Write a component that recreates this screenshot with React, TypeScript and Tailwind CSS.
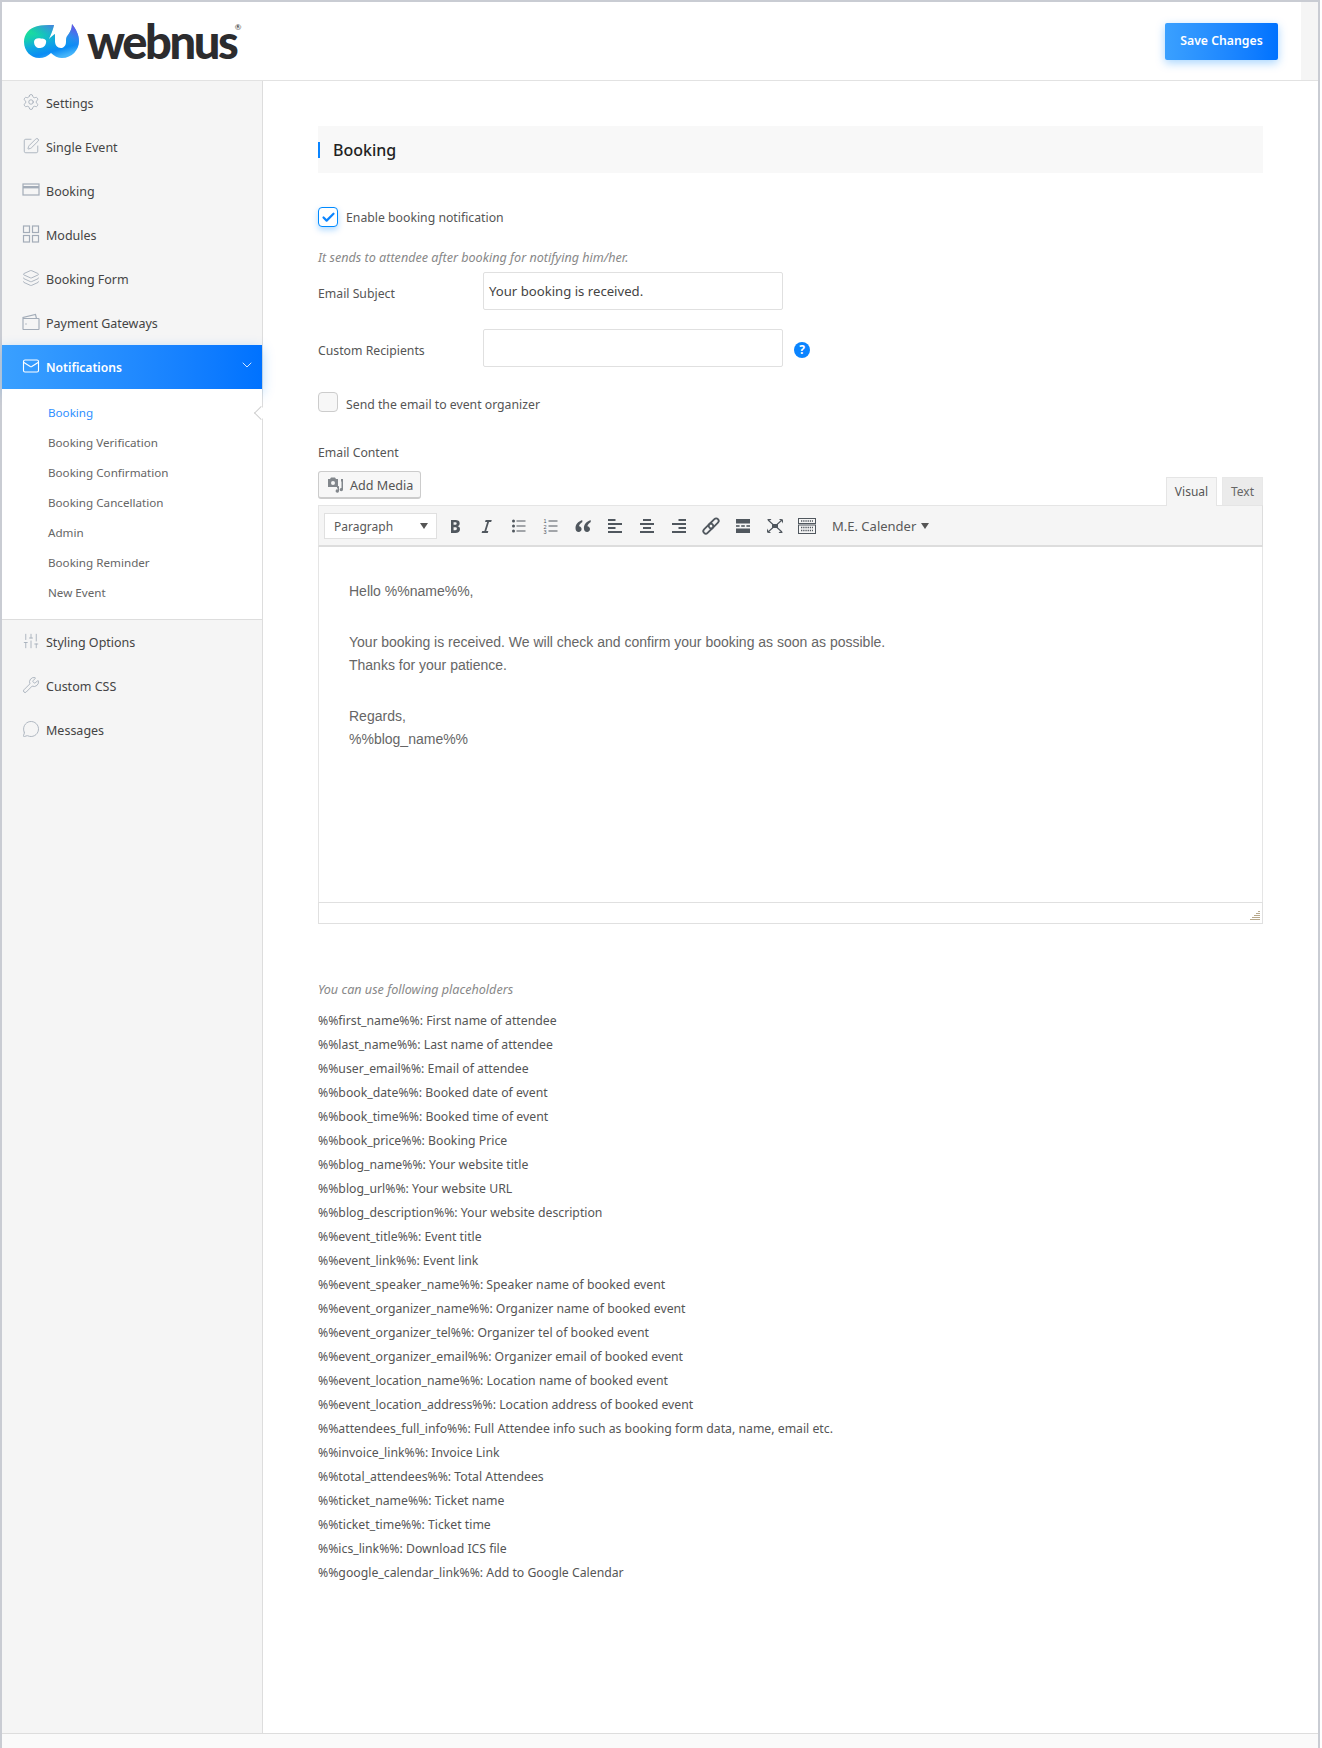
import React from "react";
import { Settings, SquarePen, Layers, Mail, ChevronDown, SlidersVertical, Wrench, MessageCircle, Check } from "lucide-react";

const ic = { size: 18, strokeWidth: 1.15, color: "#a3acb8" };

const CardIcon = () => (
  <svg width="18" height="18" viewBox="0 0 18 18" fill="none" stroke="#a3acb8" strokeWidth="1.2"><rect x="1" y="3" width="16" height="11" /><path d="M1 6.2h16" strokeWidth="2.4" /></svg>
);
const GridIcon = () => (
  <svg width="18" height="18" viewBox="0 0 18 18" fill="none" stroke="#a3acb8" strokeWidth="1.2"><rect x="1.5" y="1" width="6" height="6.5" /><rect x="10.5" y="1" width="6" height="6.5" /><rect x="1.5" y="10.5" width="6" height="6.5" /><rect x="10.5" y="10.5" width="6" height="6.5" /></svg>
);
const PurseIcon = () => (
  <svg width="18" height="18" viewBox="0 0 18 18" fill="none" stroke="#a3acb8" strokeWidth="1.15"><path d="M1.5 5.5h15a.5.5 0 01.5.5v10a.5.5 0 01-.5.5H1.5a.5.5 0 01-.5-.5V4.5L13.5 1.5l1 4" /><circle cx="4" cy="11" r=".7" fill="#a3acb8" stroke="none" /></svg>
);

const topItems: [string, React.ReactNode][] = [
  ["Settings", <Settings {...ic} />],
  ["Single Event", <SquarePen {...ic} />],
  ["Booking", <CardIcon />],
  ["Modules", <GridIcon />],
  ["Booking Form", <Layers {...ic} />],
  ["Payment Gateways", <PurseIcon />],
];
const bottomItems: [string, React.ReactNode][] = [
  ["Styling Options", <SlidersVertical {...ic} />],
  ["Custom CSS", <Wrench {...ic} />],
  ["Messages", <MessageCircle {...ic} />],
];
const subItems = ["Booking Verification", "Booking Confirmation", "Booking Cancellation", "Admin", "Booking Reminder", "New Event"];

const placeholders: [string, string][] = [
  ["first_name", "First name of attendee"],
  ["last_name", "Last name of attendee"],
  ["user_email", "Email of attendee"],
  ["book_date", "Booked date of event"],
  ["book_time", "Booked time of event"],
  ["book_price", "Booking Price"],
  ["blog_name", "Your website title"],
  ["blog_url", "Your website URL"],
  ["blog_description", "Your website description"],
  ["event_title", "Event title"],
  ["event_link", "Event link"],
  ["event_speaker_name", "Speaker name of booked event"],
  ["event_organizer_name", "Organizer name of booked event"],
  ["event_organizer_tel", "Organizer tel of booked event"],
  ["event_organizer_email", "Organizer email of booked event"],
  ["event_location_name", "Location name of booked event"],
  ["event_location_address", "Location address of booked event"],
  ["attendees_full_info", "Full Attendee info such as booking form data, name, email etc."],
  ["invoice_link", "Invoice Link"],
  ["total_attendees", "Total Attendees"],
  ["ticket_name", "Ticket name"],
  ["ticket_time", "Ticket time"],
  ["ics_link", "Download ICS file"],
  ["google_calendar_link", "Add to Google Calendar"],
];

const logoPath =
  "M30 1C23 1 18 1 14 2 5 4 0 10 0 18 0 27 7 34 15 34 20 34 24 32 27 29 30 32 34 34 38 34 48 34 55 26 55 17 55 11 52 5 48 0 48 5 46 8 44 11 42 13 42 15 42 18 42 22 39 24 37 24 33 24 31 21 31 17L31 10C29 11 27 13 25 15 27 10 29 6 30 1ZM10 18C10 15 13 13.5 17 14.5 20 15 23 15 22 19 21 23.5 17 24.5 14 24 12 23.5 10 21 10 18Z";

const Logo = () => (
  <div className="flex items-center">
    <svg width="55" height="34" viewBox="0 0 55 34" className="mt-[-1px] shrink-0">
      <defs>
        <linearGradient id="lg" x1="0.15" y1="0.05" x2="0.6" y2="1">
          <stop offset="0" stopColor="#1fe88a" />
          <stop offset="0.3" stopColor="#16d0b0" />
          <stop offset="0.55" stopColor="#0fa8e0" />
          <stop offset="0.8" stopColor="#0a8cf5" />
          <stop offset="1" stopColor="#45b4fa" />
        </linearGradient>
        <linearGradient id="lp" x1="0.95" y1="0" x2="0.6" y2="0.55">
          <stop offset="0" stopColor="#7d35ee" />
          <stop offset="0.6" stopColor="#3f7cf5" stopOpacity="0.6" />
          <stop offset="1" stopColor="#0a8cf5" stopOpacity="0" />
        </linearGradient>
      </defs>
      <path fillRule="evenodd" d={logoPath} fill="url(#lg)" />
      <path fillRule="evenodd" d={logoPath} fill="url(#lp)" />
    </svg>
    <div className="relative ml-[8px] font-['Lato','Inter',sans-serif] text-[47px] leading-[40px] font-black tracking-[-2.4px] text-[#2c2c2e]">
      webnus
      <span className="absolute right-[-5px] top-[1px] text-[8px] leading-[10px] font-normal tracking-normal">®</span>
    </div>
  </div>
);

const T = ({ children }: { children: React.ReactNode }) => (
  <span className="flex h-full w-[32px] shrink-0 items-center justify-center">{children}</span>
);
const G = ({ children }: { children: React.ReactNode }) => (
  <svg width="20" height="20" viewBox="0 0 20 20" fill="#50575e">{children}</svg>
);

const Toolbar = () => (
  <div className="flex h-[42px] items-center border-t border-b-[2px] border-t-[#e5e5e5] border-b-[#dddddd] border-r border-r-[#dddddd] border-l border-l-[#e5e5e5] bg-[#f5f5f5] pl-[5px]">
    <div className="flex h-[26px] w-[113px] items-center justify-between border border-[#e0e0e0] bg-white pl-[9px] pr-[8px] text-[12px] text-[#595959]">
      <span className="mt-[2px]">Paragraph</span>
      <span className="h-0 w-0 border-x-[4px] border-t-[6px] border-x-transparent border-t-[#555]" />
    </div>
    <div className="ml-[2px] flex h-full items-center">
      <T><G><path fillRule="evenodd" d="M6 4v13h4.54c1.37 0 2.46-.33 3.26-1 .8-.66 1.2-1.58 1.2-2.77 0-.84-.17-1.51-.51-2.01s-.9-.85-1.67-1.03v-.09c.57-.1 1.02-.4 1.36-.9s.51-1.13.51-1.91c0-1.14-.39-1.98-1.17-2.5C12.75 4.26 11.5 4 9.78 4H6zm2.57 5.15V6.18h1.31c.64 0 1.09.09 1.37.28.27.18.41.5.41.94 0 .47-.13.81-.39 1.03-.26.22-.65.32-1.17.32H8.57zm0 2.11h1.66c1.09 0 1.63.45 1.63 1.35 0 .53-.13.94-.39 1.21-.26.28-.66.42-1.2.42H8.57v-2.98z" /></G></T>
      <T><G><path d="M14.78 4l-.62 2h-2.13l-2.8 9h2.12l-.62 2H4.6l.62-2h2.14l2.8-9H8.03l.62-2z" /></G></T>
      <T><G><circle cx="4.5" cy="5" r="1.5" /><circle cx="4.5" cy="10" r="1.5" /><circle cx="4.5" cy="15" r="1.5" /><rect x="7.5" y="4.5" width="9" height="1" /><rect x="7.5" y="9.5" width="9" height="1" /><rect x="7.5" y="14.5" width="9" height="1" /></G></T>
      <T><G><text x="2.5" y="7" fontSize="5.5" fontFamily="Liberation Sans">1</text><text x="2.5" y="12.5" fontSize="5.5" fontFamily="Liberation Sans">2</text><text x="2.5" y="18" fontSize="5.5" fontFamily="Liberation Sans">3</text><rect x="7.5" y="4.5" width="9" height="1" /><rect x="7.5" y="9.5" width="9" height="1" /><rect x="7.5" y="14.5" width="9" height="1" /></G></T>
      <T><G><path d="M9.2 4C5 5.5 2.5 8.4 2.5 12c0 2.4 1.2 4 3.2 4 1.7 0 2.9-1.3 2.9-2.9 0-1.6-1.1-2.8-2.6-2.9.3-1.6 1.5-2.8 3.4-4.1zM17.6 4c-4.2 1.5-6.7 4.4-6.7 8 0 2.4 1.2 4 3.2 4 1.7 0 2.9-1.3 2.9-2.9 0-1.6-1.1-2.8-2.6-2.9.3-1.6 1.5-2.8 3.4-4.1z" /></G></T>
      <T><G><rect x="3" y="3" width="7.5" height="2" /><rect x="3" y="7" width="14" height="2" /><rect x="3" y="11" width="7.5" height="2" /><rect x="3" y="15" width="14" height="2" /></G></T>
      <T><G><rect x="6" y="3" width="8" height="2" /><rect x="3" y="7" width="14" height="2" /><rect x="6" y="11" width="8" height="2" /><rect x="3" y="15" width="14" height="2" /></G></T>
      <T><G><rect x="9.5" y="3" width="7.5" height="2" /><rect x="3" y="7" width="14" height="2" /><rect x="9.5" y="11" width="7.5" height="2" /><rect x="3" y="15" width="14" height="2" /></G></T>
      <T>
        <svg width="20" height="20" viewBox="0 0 20 20" fill="none" stroke="#50575e" strokeWidth="1.8">
          <rect x="10.2" y="1.3" width="5" height="12" rx="2.5" transform="rotate(45 12.7 7.3)" />
          <rect x="4.8" y="6.7" width="5" height="12" rx="2.5" transform="rotate(45 7.3 12.7)" />
        </svg>
      </T>
      <T><G><rect x="3" y="3" width="14" height="4.5" /><rect x="3" y="9.2" width="3.6" height="1.6" /><rect x="8.2" y="9.2" width="3.6" height="1.6" /><rect x="13.4" y="9.2" width="3.6" height="1.6" /><rect x="3" y="12.5" width="14" height="4.5" /></G></T>
      <T>
        <svg width="20" height="20" viewBox="0 0 20 20" fill="#50575e">
          <path d="M2 3h4.5L5 4.5zM18 3v4.5L16.500 5zM2 17v-4.500L3.500 15zM18 17h-4.500L15 15.500z" />
          <path d="M2 3h4L4.500 4.500zM18 3h-4l1.500 1.500zM2 17h4l-1.500-1.500zM18 17h-4l1.500-1.500z" />
          <path d="M3 4l5 4.500M17 4l-5 4.500M3 16l5-4.500M17 16l-5-4.500" stroke="#50575e" strokeWidth="1.1" fill="none" />
          <rect x="7" y="8" width="6" height="4" />
        </svg>
      </T>
      <T>
        <svg width="20" height="20" viewBox="0 0 20 20" fill="none" stroke="#50575e" strokeWidth="1">
          <rect x="1.500" y="2.500" width="17" height="5" />
          <rect x="1.500" y="9" width="17" height="8.500" />
          <path d="M4 5h12M4 11.500h12M4 14.500h12" strokeDasharray="1.300 .9" strokeWidth="1.500" />
        </svg>
      </T>
    </div>
    <span className="ml-[9px] mt-[2px] text-[13px] text-[#595959]">M.E. Calender</span>
    <span className="ml-[5px] h-0 w-0 border-x-[4px] border-t-[6px] border-x-transparent border-t-[#555]" />
  </div>
);

export default function App() {
  return (
    <div className="h-[1748px] w-[1322px] overflow-hidden bg-white pr-[2px] font-['Noto_Sans',sans-serif]">
      <div className="flex h-full flex-col border-x-2 border-t-2 border-x-[#c9ccd3] border-t-[#c9ccd3]">
        <header className="flex h-[79px] shrink-0 border-b border-[#e2e2e2]">
          <div className="flex flex-1 items-center justify-between pl-[22px] pr-[23px]">
            <Logo />
            <button className="h-[37px] w-[113px] rounded-[2px] bg-gradient-to-r from-[#3aa0ff] to-[#0072ff] text-[12.25px] font-semibold text-white shadow-[0_3px_10px_rgba(0,136,255,0.35)]">
              Save Changes
            </button>
          </div>
          <div className="w-[17px] bg-[#f5f5f5]" />
        </header>

        <div className="flex min-h-0 flex-1">
          <aside className="relative flex w-[261px] shrink-0 flex-col border-r border-[#dddddd] bg-[#f5f5f5] text-[12.5px] text-[#444]">
            {topItems.map(([label, icon]) => (
              <div key={label} className="flex h-[44px] items-center pl-[20px]">
                <span className="mt-[-2px] mr-[6px] flex w-[18px] justify-center">{icon}</span>
                <span className="mt-[3px]">{label}</span>
              </div>
            ))}
            <div className="flex h-[44px] items-center bg-gradient-to-r from-[#3aa0ff] to-[#0072ff] pl-[20px] pr-[7px] text-[12.1px] font-semibold text-white shadow-[0_4px_12px_rgba(0,136,255,0.3)]">
              <span className="mt-[-2px] mr-[6px] flex w-[18px] justify-center"><Mail size={18} strokeWidth={1.5} color="#fff" /></span>
              <span className="mt-[3px]">Notifications</span>
              <ChevronDown size={16} strokeWidth={1.25} color="#fff" className="mt-[-4px] ml-auto" />
            </div>
            <div className="relative flex h-[231px] flex-col border-b border-[#dddddd] bg-white pt-[9px] pl-[46px] text-[11.65px] text-[#666]">
              <div className="flex h-[30px] items-center text-[#2f8fff]">Booking</div>
              {subItems.map((s) => (
                <div key={s} className="flex h-[30px] items-center">{s}</div>
              ))}
              <span className="absolute right-[-4px] top-[19px] h-[10px] w-[10px] rotate-45 border-b border-l border-[#cfcfcf] bg-white" />
            </div>
            {bottomItems.map(([label, icon]) => (
              <div key={label} className="flex h-[44px] items-center pl-[20px]">
                <span className="mt-[-2px] mr-[6px] flex w-[18px] justify-center">{icon}</span>
                <span className="mt-[3px]">{label}</span>
              </div>
            ))}
          </aside>

          <main className="flex-1 pt-[45px] pl-[55px] pr-[55px] text-[12.25px] text-[#555]">
            <div className="flex h-[47px] w-[945px] items-center bg-[#f8f8f8]">
              <span className="h-[16px] w-[2px] bg-[#0a84ff]" />
              <h2 className="ml-[13px] text-[16px] font-medium text-[#222]">Booking</h2>
            </div>

            <label className="mt-[34px] flex h-[20px] items-center">
              <span className="flex h-[20px] w-[20px] items-center justify-center rounded-[4px] border border-[#008aff] bg-white shadow-[0_3px_6px_rgba(0,136,255,0.3)]">
                <Check size={15} strokeWidth={3.5} color="#0a84ff" />
              </span>
              <span className="mt-[3px] ml-[8px]">Enable booking notification</span>
            </label>

            <p className="mt-[21px] h-[20px] text-[12.6px] leading-[20px] italic text-[#888]">It sends to attendee after booking for notifying him/her.</p>

            <div className="mt-[4px] flex items-center">
              <span className="w-[165px] pt-[7px]">Email Subject</span>
              <div className="flex h-[38px] w-[300px] items-center rounded-[2px] border border-[#e0e0e0] pt-[2px] pl-[5px] text-[13.15px] text-[#444]">Your booking is received.</div>
            </div>
            <div className="mt-[19px] flex items-center">
              <span className="w-[165px] pt-[6px]">Custom Recipients</span>
              <div className="h-[38px] w-[300px] rounded-[2px] border border-[#e0e0e0]" />
              <span className="mt-[3px] ml-[11px] flex h-[16px] w-[16px] items-center justify-center rounded-full bg-[#0a84ff] text-[12px] leading-none font-bold text-white">?</span>
            </div>

            <label className="mt-[25px] flex h-[20px] items-center">
              <span className="h-[20px] w-[20px] rounded-[4px] border border-[#cccccc] bg-[#f7f7f7]" />
              <span className="ml-[8px] mt-[7px]">Send the email to event organizer</span>
            </label>

            <div className="mt-[31px] h-[20px] leading-[20px]">Email Content</div>

            <div className="mt-[8px] flex w-[945px] items-end justify-between">
              <button className="mb-[6px] flex h-[28px] w-[103px] items-center rounded-[3px] border border-[#cccccc] border-b-2 bg-[#f7f7f7] pl-[8px] text-[12.6px] text-[#555]">
                <svg width="18" height="18" viewBox="0 0 18 18" fill="#82878c" className="shrink-0">
                  <path fillRule="evenodd" d="M1 3h2l1-1.5h4L9 3h2v8H1zM6 5a2 2 0 100 4 2 2 0 000-4z" />
                  <path d="M10 12.5V10.5l2-.6V15a1.7 1.7 0 11-1-1.5v-1zM14 3h2v10.5a1.7 1.7 0 11-1.5-1.6V5.5H14z" />
                </svg>
                <span className="mt-[3px] ml-[5px]">Add Media</span>
              </button>
              <div className="flex items-end text-[12px]">
                <div className="z-10 mb-[-1px] flex h-[29px] w-[51px] items-center justify-center border border-b-0 border-[#e5e5e5] bg-[#f5f5f5] text-[#555]">Visual</div>
                <div className="ml-[5px] flex h-[28px] w-[41px] items-center justify-center border border-b-0 border-[#e8e8e8] bg-[#ebebeb] text-[#666]">Text</div>
              </div>
            </div>

            <div className="w-[945px]">
              <Toolbar />
              <div className="h-[355px] border-x border-[#e5e5e5] pt-[33px] pl-[30px] font-['Liberation_Sans',sans-serif] text-[14px] leading-[23px] text-[#666]">
                <p>Hello %%name%%,</p>
                <p className="mt-[28px]">Your booking is received. We will check and confirm your booking as soon as possible.<br />Thanks for your patience.</p>
                <p className="mt-[28px]">Regards,<br />%%blog_name%%</p>
              </div>
              <div className="relative h-[22px] border border-[#e0e0e0]">
                <svg width="10" height="10" viewBox="0 0 10 10" className="absolute right-[2px] bottom-[2px]" fill="#b8a98c">
                  <rect x="8" y="0" width="2" height="1" /><rect x="6" y="2" width="4" height="1" /><rect x="4" y="4" width="6" height="1" /><rect x="2" y="6" width="8" height="1" /><rect x="0" y="8" width="10" height="1" />
                </svg>
              </div>
            </div>

            <p className="mt-[56px] h-[20px] text-[12.6px] leading-[20px] italic text-[#888]">You can use following placeholders</p>
            <div className="mt-[9px] leading-[24px] text-[#555]">
              {placeholders.map(([k, v]) => (
                <div key={k}>{`%%${k}%%: ${v}`}</div>
              ))}
            </div>
          </main>
        </div>

        <footer className="h-[15px] shrink-0 border-t border-[#dddddd] bg-[#fafafa]" />
      </div>
    </div>
  );
}
